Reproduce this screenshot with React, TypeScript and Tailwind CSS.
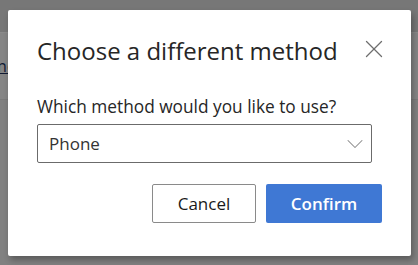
import { ChevronDown, X } from "lucide-react";

export default function App() {
  return (
    <div
      className="relative h-[265px] w-[418px] overflow-hidden bg-[#808080]"
      style={{ fontFamily: '"Open Sans", "Noto Sans", sans-serif' }}
    >
      {/* dimmed page behind the modal */}
      <div className="h-[33px] border-b border-[#8a8a8a] bg-[#777777]" />
      <div className="flex h-[67px] items-center border-b border-[#7a7a7a] bg-[#858585]">
        <span className="-ml-[32px] text-[16px] text-[#101a33] underline">Phone</span>
      </div>
      <div className="h-[165px] bg-[#818181]" />

      <div className="absolute left-[8px] top-[10px] flex h-[246px] w-[403px] flex-col rounded-[2px] bg-white px-[29px] pt-[25px] shadow-[2px_4px_6px_rgba(0,0,0,0.3)]">
        <div className="flex items-start justify-between">
          <h1 className="text-[24px] leading-[32px] text-[#262626]">Choose a different method</h1>
          <button className="-mr-[7px] -mt-[1px] text-[#6e6e6e]">
            <X size={30} strokeWidth={1} />
          </button>
        </div>

        <label className="mt-[28px] block text-[17.3px] leading-[24px] text-[#262626]">
          Which method would you like to use?
        </label>
        <div className="mt-[5px] flex h-[39px] w-[335px] items-center justify-between rounded-[2px] border border-[#6b6b6b] pl-[11px] pr-[2px]">
          <span className="text-[17px] text-[#333333]">Phone</span>
          <ChevronDown size={28} strokeWidth={0.9} className="text-[#8a8a8a]" />
        </div>

        <div className="mt-[21px] flex justify-end gap-[10px]">
          <button className="h-[39px] w-[104px] rounded-[2px] border border-[#8a8a8a] bg-white text-[17px] text-[#1a1a1a]">
            Cancel
          </button>
          <button className="h-[39px] w-[116px] rounded-[2px] bg-[#3f78d4] text-[17px] font-semibold text-white">
            Confirm
          </button>
        </div>
      </div>
    </div>
  );
}
